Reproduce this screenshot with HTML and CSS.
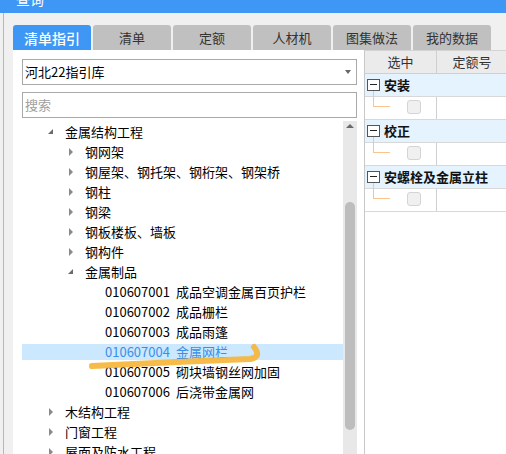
FILE: index.html
```html
<!DOCTYPE html>
<html lang="zh-CN">
<head>
<meta charset="utf-8">
<title>查询</title>
<link rel="stylesheet" href="styles.css">
</head>
<body>
<div class="titlebar"><span class="title">查询</span></div>
<div class="frame">
  <div class="tabs">
    <div class="tab active">清单指引</div>
    <div class="tab">清单</div>
    <div class="tab">定额</div>
    <div class="tab">人材机</div>
    <div class="tab">图集做法</div>
    <div class="tab">我的数据</div>
  </div>
  <div class="content">
    <div class="left">
      <div class="select"><span>河北22指引库</span><span class="caret"></span></div>
      <div class="search"><span class="placeholder">搜索</span></div>
      <div class="treewrap">
        <div class="tree">
          <div class="row l0"><span class="arr open"></span><span>金属结构工程</span></div>
          <div class="row l1"><span class="arr closed"></span><span>钢网架</span></div>
          <div class="row l1"><span class="arr closed"></span><span>钢屋架、钢托架、钢桁架、钢架桥</span></div>
          <div class="row l1"><span class="arr closed"></span><span>钢柱</span></div>
          <div class="row l1"><span class="arr closed"></span><span>钢梁</span></div>
          <div class="row l1"><span class="arr closed"></span><span>钢板楼板、墙板</span></div>
          <div class="row l1"><span class="arr closed"></span><span>钢构件</span></div>
          <div class="row l1"><span class="arr open"></span><span>金属制品</span></div>
          <div class="row l2"><span class="arr"></span><span class="code">010607001</span><span>成品空调金属百页护栏</span></div>
          <div class="row l2"><span class="arr"></span><span class="code">010607002</span><span>成品栅栏</span></div>
          <div class="row l2"><span class="arr"></span><span class="code">010607003</span><span>成品雨篷</span></div>
          <div class="row l2 selected"><span class="arr"></span><span class="code">010607004</span><span>金属网栏</span></div>
          <div class="row l2"><span class="arr"></span><span class="code">010607005</span><span>砌块墙钢丝网加固</span></div>
          <div class="row l2"><span class="arr"></span><span class="code">010607006</span><span>后浇带金属网</span></div>
          <div class="row l0"><span class="arr closed"></span><span>木结构工程</span></div>
          <div class="row l0"><span class="arr closed"></span><span>门窗工程</span></div>
          <div class="row l0"><span class="arr closed"></span><span>屋面及防水工程</span></div>
        </div>
        <div class="scrollbar">
          <span class="up"></span>
          <span class="thumb"></span>
        </div>
      </div>
    </div>
    <div class="right">
      <div class="thead">
        <div class="c1">选中</div>
        <div class="c2">定额号</div>
      </div>
      <div class="group"><span class="minus"></span><span class="gname">安装</span></div>
      <div class="child"><div class="c1"><span class="conn"></span><span class="check"></span></div><div class="c2"></div></div>
      <div class="group"><span class="minus"></span><span class="gname">校正</span></div>
      <div class="child"><div class="c1"><span class="conn"></span><span class="check"></span></div><div class="c2"></div></div>
      <div class="group"><span class="minus"></span><span class="gname">安螺栓及金属立柱</span></div>
      <div class="child"><div class="c1"><span class="conn"></span><span class="check"></span></div><div class="c2"></div></div>
    </div>
  </div>
</div>
<svg class="mark" width="506" height="454" viewBox="0 0 506 454">
  <path d="M92 366 Q170 362 250 359 Q262 357 254 347" fill="none" stroke="#f6b539" stroke-width="6" stroke-linecap="round" stroke-linejoin="round" opacity="0.92"/>
</svg>
</body>
</html>
```
FILE: styles.css
```css
* { box-sizing: border-box; }
html, body { margin: 0; padding: 0; }
body {
  width: 506px;
  height: 454px;
  overflow: hidden;
  background: #f0f0f0;
  font-family: "Noto Sans CJK SC", "Microsoft YaHei", sans-serif;
  font-size: 13px;
  color: #000;
  position: relative;
}
.titlebar {
  height: 13px;
  background: #3f97f5;
  overflow: hidden;
  padding-left: 16px;
}
.title {
  display: block;
  color: #fff;
  font-size: 14px;
  line-height: 14px;
  margin-top: -8px;
}
.frame {
  margin-left: 3px;
  border-left: 1px solid #b7b7b7;
  padding-left: 9px;
  padding-top: 12px;
  height: 441px;
}
.tabs {
  display: flex;
  gap: 2px;
  height: 25px;
}
.tab {
  width: 78px;
  height: 25px;
  background: #c0c0c0;
  color: #333;
  border-radius: 3px 3px 0 0;
  display: flex;
  align-items: center;
  justify-content: center;
  font-size: 13px;
  line-height: 16px;
}
.tab.active {
  background: #3f97f5;
  color: #fff;
  font-size: 14px;
  font-weight: 500;
}
.content {
  display: flex;
  height: 404px;
  overflow: hidden;
}
.left {
  width: 351px;
  background: #fff;
  padding: 9px 7px 0 9px;
  display: flex;
  flex-direction: column;
}
.select, .search {
  height: 26px;
  border: 1px solid #a9a9a9;
  display: flex;
  align-items: center;
  justify-content: space-between;
  padding: 0 5px 0 2px;
  line-height: 16px;
  flex: none;
}
.caret {
  width: 0;
  height: 0;
  border-left: 3.5px solid transparent;
  border-right: 3.5px solid transparent;
  border-top: 4px solid #666;
}
.search { margin-top: 7px; }
.placeholder { color: #a0a0a0; }
.treewrap {
  margin-top: 3px;
  flex: 1;
  display: flex;
  overflow: hidden;
}
.tree {
  width: 321px;
  padding-top: 3px;
  display: flex;
  flex-direction: column;
  gap: 4px;
}
.row {
  height: 16px;
  line-height: 16px;
  display: flex;
  align-items: center;
  white-space: nowrap;
  flex: none;
}
.row.l0 { padding-left: 26px; }
.row.l1 { padding-left: 46px; }
.row.l2 { padding-left: 66px; }
.arr {
  width: 17px;
  height: 16px;
  flex: none;
  position: relative;
}
.arr.closed::before {
  content: "";
  position: absolute;
  left: 1px;
  top: 4px;
  border-top: 4px solid transparent;
  border-bottom: 4px solid transparent;
  border-left: 4px solid #8a8a8a;
}
.arr.open::before {
  content: "";
  position: absolute;
  left: 0;
  top: 5px;
  border-left: 5px solid transparent;
  border-bottom: 5px solid #6a6a6a;
}
.code {
  display: inline-block;
  width: 71px;
}
.row.selected {
  background: #cce8ff;
  color: #3a8ee6;
}
.scrollbar {
  width: 14px;
  background: #e8e8e8;
  display: flex;
  flex-direction: column;
  align-items: center;
}
.up {
  margin-top: 3px;
  width: 0;
  height: 0;
  border-left: 4px solid transparent;
  border-right: 4px solid transparent;
  border-bottom: 4px solid #6a6a6a;
}
.thumb {
  margin-top: 74px;
  width: 10px;
  height: 228px;
  border-radius: 5px;
  background: #bdbdbd;
}
.right {
  flex: 1;
  background: #fff;
  border-left: 1px solid #c8c8c8;
  border-top: 1px solid #d4d4d4;
}
.thead {
  display: flex;
  height: 23px;
  background: #ebebeb;
  border-bottom: 1px solid #cfcfcf;
  color: #333;
  line-height: 16px;
}
.thead .c1, .child .c1 {
  width: 72px;
  border-right: 1px solid #cfcfcf;
  flex: none;
}
.thead .c1, .thead .c2 {
  display: flex;
  align-items: center;
  justify-content: center;
}
.thead .c2 { width: 70px; flex: none; }
.group {
  height: 23px;
  background: #e5f3ff;
  border-bottom: 1px solid #d8d8d8;
  display: flex;
  align-items: center;
  padding-left: 2px;
}
.minus {
  width: 13px;
  height: 12px;
  border: 1px solid #555;
  background: #fff;
  position: relative;
  flex: none;
}
.minus::after {
  content: "";
  position: absolute;
  left: 2px;
  right: 2px;
  top: 4px;
  height: 1px;
  background: #222;
}
.gname {
  margin-left: 4px;
  font-weight: bold;
  line-height: 16px;
  color: #111;
}
.child {
  height: 23px;
  border-bottom: 1px solid #d8d8d8;
  display: flex;
}
.child .c1 {
  display: flex;
  align-items: flex-start;
}
.conn {
  margin-left: 8px;
  margin-top: -6px;
  width: 17px;
  height: 16px;
  border-left: 1px solid #f7c68c;
  border-bottom: 1px solid #f7c68c;
  flex: none;
}
.check {
  margin-left: 17px;
  margin-top: 3px;
  width: 14px;
  height: 14px;
  border: 1px solid #d4d4d4;
  border-radius: 3px;
  background: #f0f0f0;
  flex: none;
}
.mark {
  position: absolute;
  left: 0;
  top: 0;
  pointer-events: none;
}
```
